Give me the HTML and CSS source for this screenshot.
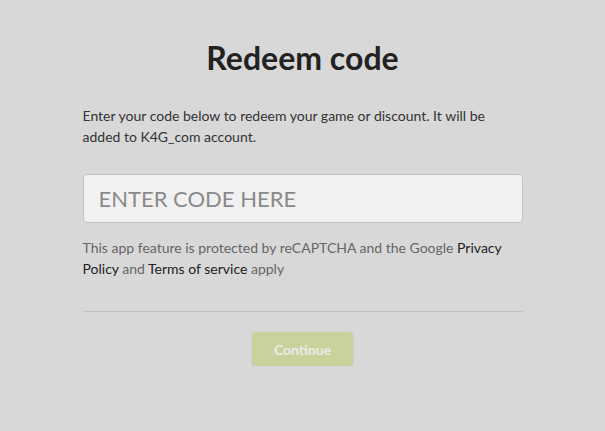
FILE: index.html
```html
<!DOCTYPE html>
<html>
<head>
<meta charset="utf-8">
<link rel="stylesheet" href="styles.css">
</head>
<body>
<main class="redeem">
  <h1 class="title">Redeem code</h1>
  <p class="intro">Enter your code below to redeem your game or discount. It will be added to K4G_com account.</p>
  <input class="code-input" type="text" placeholder="ENTER CODE HERE">
  <p class="captcha">This app feature is protected by reCAPTCHA and the Google <a href="#">Privacy Policy</a> and <a href="#">Terms of service</a> apply</p>
  <hr class="divider">
  <div class="actions"><button class="continue" type="button">Continue</button></div>
</main>
</body>
</html>
```
FILE: styles.css
```css
html, body {
  margin: 0;
  padding: 0;
  background: #d8d8d8;
  font-family: Lato, "Liberation Sans", sans-serif;
}
.redeem {
  width: 440px;
  margin: 0 auto;
  padding-top: 38px;
  display: flex;
  flex-direction: column;
}
.title {
  margin: 0;
  text-align: center;
  font-size: 32px;
  font-weight: 700;
  line-height: 40px;
  color: #222;
}
.intro {
  margin: 27px 0 0;
  font-size: 14px;
  line-height: 21px;
  color: #333;
}
.code-input {
  margin-top: 27px;
  box-sizing: border-box;
  width: 440px;
  height: 49px;
  border: 1px solid #c2c2c2;
  border-radius: 4px;
  background: #f1f1f1;
  padding: 0 15px;
  font-family: Lato, "Liberation Sans", sans-serif;
  font-size: 22px;
  color: #333;
  outline: none;
}
.code-input::placeholder {
  color: #8a8a8a;
}
.captcha {
  margin: 14px 0 0;
  font-size: 14px;
  line-height: 21px;
  color: #666;
}
.captcha a {
  color: #222;
  text-decoration: none;
}
.divider {
  margin: 32px 0 0;
  border: 0;
  border-top: 1px solid #c2c2c2;
  height: 0;
}
.actions {
  display: flex;
  justify-content: center;
  margin-top: 20px;
}
.continue {
  width: 101px;
  height: 34px;
  border: 0;
  border-radius: 4px;
  background: #c8d29a;
  color: #ececec;
  font-family: Lato, "Liberation Sans", sans-serif;
  font-size: 14px;
  font-weight: 700;
  box-shadow: 0 1px 2px rgba(0,0,0,0.12);
}
```
